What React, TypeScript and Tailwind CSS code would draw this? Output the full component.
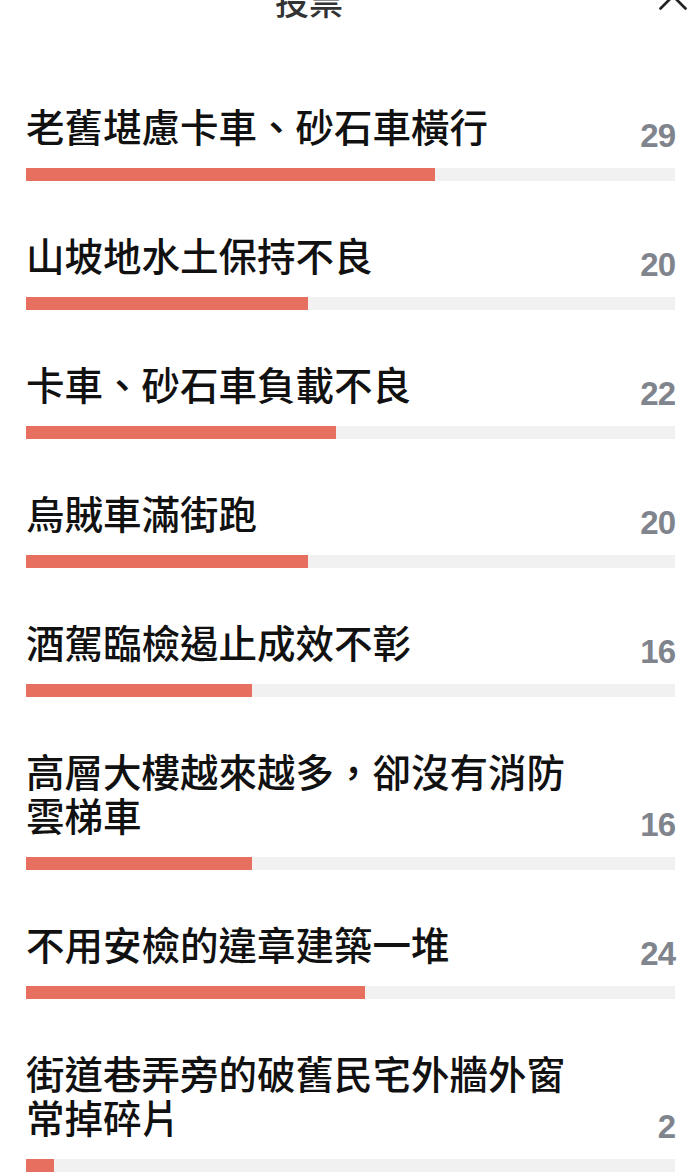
import { X } from "lucide-react";

type Option = { label: string; votes: number };

const options: Option[] = [
  { label: "老舊堪慮卡車、砂石車橫行", votes: 29 },
  { label: "山坡地水土保持不良", votes: 20 },
  { label: "卡車、砂石車負載不良", votes: 22 },
  { label: "烏賊車滿街跑", votes: 20 },
  { label: "酒駕臨檢遏止成效不彰", votes: 16 },
  { label: "高層大樓越來越多，卻沒有消防雲梯車", votes: 16 },
  { label: "不用安檢的違章建築一堆", votes: 24 },
  { label: "街道巷弄旁的破舊民宅外牆外窗常掉碎片", votes: 2 },
];

const TOTAL = 46;

function PollRow({ option }: { option: Option }) {
  const pct = (option.votes / TOTAL) * 100;
  return (
    <div className="mb-[51px]">
      <div className="flex items-end justify-between">
        <div className="max-w-[555px] text-[38.5px] leading-[44px] font-medium text-[#111]">
          {option.label}
        </div>
        <div className="mb-[-5px] text-[33px] leading-none font-bold text-[#80848c] font-['Liberation_Sans',Arial,sans-serif] tracking-[-1px]">
          {option.votes}
        </div>
      </div>
      <div className="mt-[21px] h-[13px] bg-[#f1f1f1]">
        <div className="h-full bg-[#e66f60]" style={{ width: `${pct}%` }} />
      </div>
    </div>
  );
}

export default function App() {
  return (
    <main className="w-[700px] h-[1174px] overflow-hidden bg-white font-['Noto_Sans_CJK_TC','Noto_Sans',sans-serif]">
      <header className="relative -mt-[26px] h-[52px] flex items-center justify-center pr-[82px]">
        <h1 className="text-[34px] text-[#333] font-medium">投票</h1>
        <X className="absolute right-[2px] top-[-3px] w-[50px] h-[50px] text-[#222]" strokeWidth={1.3} />
      </header>
      <div className="pl-[26px] pr-[25px] pt-[77px]">
        {options.map((o) => (
          <PollRow key={o.label} option={o} />
        ))}
      </div>
    </main>
  );
}
